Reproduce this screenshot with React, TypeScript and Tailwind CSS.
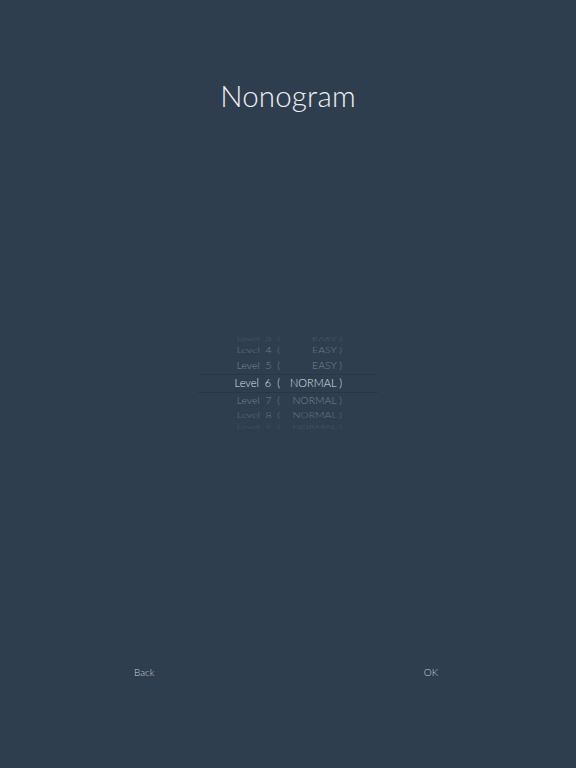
const rows = [
  { n: 3, d: 'EASY )', h: 'h-[8px]', t: 'scale-y-[0.45] opacity-30', c: 'text-[#9aa6b2]' },
  { n: 4, d: 'EASY )', h: 'h-[14px]', t: 'scale-y-[0.75] opacity-55', c: 'text-[#9aa6b2]' },
  { n: 5, d: 'EASY )', h: 'h-[16px]', t: 'scale-y-[0.92] opacity-70', c: 'text-[#9aa6b2]' },
  { n: 6, d: 'NORMAL )', h: 'h-[19px]', t: '', c: 'text-[#dfe4e9]' },
  { n: 7, d: 'NORMAL )', h: 'h-[16px]', t: 'scale-y-[0.92] opacity-65', c: 'text-[#9aa6b2]' },
  { n: 8, d: 'NORMAL )', h: 'h-[14px]', t: 'scale-y-[0.75] opacity-50', c: 'text-[#9aa6b2]' },
  { n: 9, d: 'NORMAL )', h: 'h-[9px]', t: 'scale-y-[0.45] opacity-25', c: 'text-[#9aa6b2]' },
]

export default function App() {
  return (
    <main className="w-[576px] h-[768px] bg-[#2f3e4f] flex flex-col items-center font-['Lato','Noto_Sans',sans-serif] overflow-hidden">
      <h1 className="mt-[76px] text-[29.5px] font-light tracking-[0.2px] text-[#eef1f4] leading-[40px]">Nonogram</h1>

      {/* level picker */}
      <div className="mt-[220px] w-[180px] flex flex-col">
        {rows.map(r => (
          <div
            key={r.n}
            className={`${r.h} flex items-center ${r.n === 6 ? 'border-y border-[#283645]' : ''}`}
          >
            <div className={`w-full flex items-center font-light ${r.n === 6 ? 'text-[11px]' : 'text-[10.5px]'} ${r.c} ${r.t}`}>
              <span className="w-[82px] text-right whitespace-pre">{`Level  ${r.n}  (`}</span>
              <span className="w-[62px] text-right">{r.d}</span>
            </div>
          </div>
        ))}
      </div>

      <div className="mt-auto mb-[88px] w-full flex justify-between pl-[134px] pr-[138px] text-[10px] font-light text-[#c3cbd3]">
        <button>Back</button>
        <button>OK</button>
      </div>
    </main>
  )
}
